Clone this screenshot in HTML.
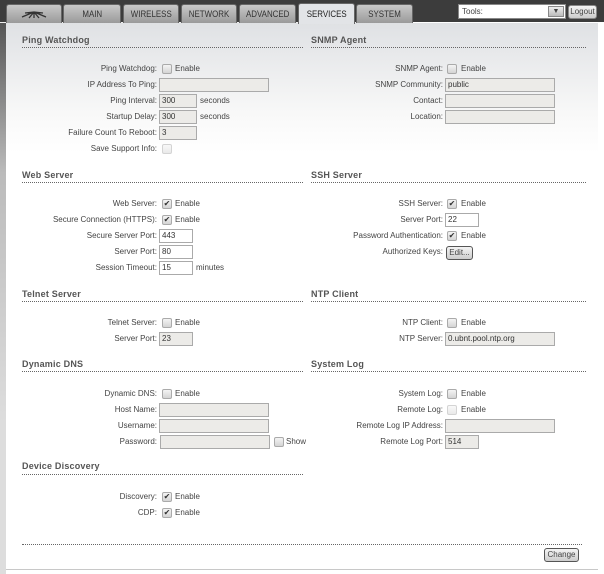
<!DOCTYPE html>
<html><head><meta charset="utf-8"><style>
*{margin:0;padding:0;box-sizing:border-box}
body{width:604px;height:574px;position:relative;overflow:hidden;background:#fff;font-family:"Liberation Sans",Arial,sans-serif;font-size:8px;color:#444}
#top{position:absolute;left:0;top:0;width:604px;height:23px;background:#3c3c3c}
#strip{position:absolute;left:0;top:23px;width:6px;height:551px;background:linear-gradient(#555,#bbb 150px,#ddd 400px,#ddd)}
#panel{position:absolute;left:6px;top:23px;width:592px;height:547px;background:linear-gradient(#dfe1e4,#f8f8f8 90px,#fff 130px);border-bottom:1px solid #c8c8c8}
.tab{position:absolute;top:4px;height:19px;background:linear-gradient(#c8c8c8,#9a9a9a);border:1px solid #666;border-bottom:none;border-radius:3px 3px 0 0;font-size:9px;color:#333;text-align:center;line-height:18px;transform-origin:center}
.tab span{display:inline-block;transform:scaleX(.88)}
.tab.act{background:#e2e4e7;top:3px;height:21px;color:#222;line-height:20px}
.l{position:absolute;text-align:right;line-height:14px;white-space:nowrap}
.t{position:absolute;line-height:14px;white-space:nowrap}
.h{position:absolute;font-weight:bold;font-size:9px;color:#555;line-height:14px;letter-spacing:.2px}
.d{position:absolute;height:1px;border-top:1px dotted #666}
.in{position:absolute;height:14px;border:1px solid #aaa;background:#ecebe8;font-size:8px;line-height:12px;padding-left:2px;color:#333}
.in.w{background:#fff}
.cb{position:absolute;width:10px;height:10px;border:1px solid #aaa;border-radius:2px;background:linear-gradient(#f4f4f4,#d4d4d4);font-size:8px;line-height:8px;text-align:center;color:#333}
.btn{position:absolute;height:14px;border:1px solid #555;border-radius:3px;background:linear-gradient(#f4f4f4,#ccc);font-size:8px;line-height:12px;text-align:center}
</style></head><body>
<div id="top"></div>
<div id="strip"></div>
<div id="panel"></div>
<div style="position:absolute;left:0;top:22px;width:604px;height:1px;background:#eee"></div>
<div class="tab" style="left:6px;width:56px"><svg width="30" height="12" viewBox="0 0 30 12" style="margin-top:3px"><path d="M3 9 L15 4 L27 9 M15 4 L10 10 M15 4 L20 10 M15 4 L15 10 M6 5 L15 4 L24 5" stroke="#333" stroke-width="1.3" fill="none"/></svg></div>
<div class="tab" style="left:63px;width:58px"><span>MAIN</span></div>
<div class="tab" style="left:123px;width:56px"><span>WIRELESS</span></div>
<div class="tab" style="left:181px;width:56px"><span>NETWORK</span></div>
<div class="tab" style="left:239px;width:57px"><span>ADVANCED</span></div>
<div class="tab act" style="left:298px;width:57px"><span>SERVICES</span></div>
<div class="tab" style="left:356px;width:57px"><span>SYSTEM</span></div>
<div style="position:absolute;left:413px;top:22px;width:191px;height:1px;background:#fff"></div>
<div style="position:absolute;left:458px;top:4px;width:108px;height:15px;background:#fff;border:1px solid #888;font-size:8px;line-height:13px;padding-left:3px">Tools:<div style="position:absolute;right:1px;top:1px;width:16px;height:11px;background:linear-gradient(#eee,#bbb);border:1px solid #888;font-size:7px;line-height:9px;text-align:center">▼</div></div>
<div class="btn" style="left:568px;top:5px;width:29px;border-color:#888">Logout</div>

<div class="h" style="left:22px;top:33px">Ping Watchdog</div><div class="d" style="left:22px;top:47px;width:281px"></div>
<div class="h" style="left:311px;top:33px">SNMP Agent</div><div class="d" style="left:311px;top:47px;width:275px"></div>
<div class="h" style="left:22px;top:168px">Web Server</div><div class="d" style="left:22px;top:182px;width:281px"></div>
<div class="h" style="left:311px;top:168px">SSH Server</div><div class="d" style="left:311px;top:182px;width:275px"></div>
<div class="h" style="left:22px;top:287px">Telnet Server</div><div class="d" style="left:22px;top:301px;width:281px"></div>
<div class="h" style="left:311px;top:287px">NTP Client</div><div class="d" style="left:311px;top:301px;width:275px"></div>
<div class="h" style="left:22px;top:357px">Dynamic DNS</div><div class="d" style="left:22px;top:371px;width:281px"></div>
<div class="h" style="left:311px;top:357px">System Log</div><div class="d" style="left:311px;top:371px;width:275px"></div>
<div class="h" style="left:22px;top:459px">Device Discovery</div><div class="d" style="left:22px;top:474px;width:281px"></div>
<div class="d" style="left:22px;top:544px;width:560px"></div>

<div class="l" style="left:0;width:157px;top:62px">Ping Watchdog:</div><div class="cb" style="left:162px;top:64px"></div><div class="t" style="left:175px;top:62px">Enable</div>
<div class="l" style="left:0;width:157px;top:78px">IP Address To Ping:</div><div class="in" style="left:159px;top:78px;width:110px"></div>
<div class="l" style="left:0;width:157px;top:94px">Ping Interval:</div><div class="in" style="left:159px;top:94px;width:38px">300</div><div class="t" style="left:200px;top:94px">seconds</div>
<div class="l" style="left:0;width:157px;top:110px">Startup Delay:</div><div class="in" style="left:159px;top:110px;width:38px">300</div><div class="t" style="left:200px;top:110px">seconds</div>
<div class="l" style="left:0;width:157px;top:126px">Failure Count To Reboot:</div><div class="in" style="left:159px;top:126px;width:38px">3</div>
<div class="l" style="left:0;width:157px;top:142px">Save Support Info:</div><div class="cb" style="left:162px;top:144px;opacity:.5"></div>

<div class="l" style="left:0;width:157px;top:197px">Web Server:</div><div class="cb" style="left:162px;top:199px">✔</div><div class="t" style="left:175px;top:197px">Enable</div>
<div class="l" style="left:0;width:157px;top:213px">Secure Connection (HTTPS):</div><div class="cb" style="left:162px;top:215px">✔</div><div class="t" style="left:175px;top:213px">Enable</div>
<div class="l" style="left:0;width:157px;top:229px">Secure Server Port:</div><div class="in w" style="left:159px;top:229px;width:34px">443</div>
<div class="l" style="left:0;width:157px;top:245px">Server Port:</div><div class="in w" style="left:159px;top:245px;width:34px">80</div>
<div class="l" style="left:0;width:157px;top:261px">Session Timeout:</div><div class="in w" style="left:159px;top:261px;width:34px">15</div><div class="t" style="left:196px;top:261px">minutes</div>

<div class="l" style="left:0;width:157px;top:316px">Telnet Server:</div><div class="cb" style="left:162px;top:318px"></div><div class="t" style="left:175px;top:316px">Enable</div>
<div class="l" style="left:0;width:157px;top:332px">Server Port:</div><div class="in" style="left:159px;top:332px;width:34px">23</div>

<div class="l" style="left:0;width:157px;top:387px">Dynamic DNS:</div><div class="cb" style="left:162px;top:389px"></div><div class="t" style="left:175px;top:387px">Enable</div>
<div class="l" style="left:0;width:157px;top:403px">Host Name:</div><div class="in" style="left:159px;top:403px;width:110px"></div>
<div class="l" style="left:0;width:157px;top:419px">Username:</div><div class="in" style="left:159px;top:419px;width:110px"></div>
<div class="l" style="left:0;width:157px;top:435px">Password:</div><div class="in" style="left:160px;top:435px;width:110px"></div><div class="cb" style="left:274px;top:437px"></div><div class="t" style="left:286px;top:435px">Show</div>

<div class="l" style="left:0;width:157px;top:490px">Discovery:</div><div class="cb" style="left:162px;top:492px">✔</div><div class="t" style="left:175px;top:490px">Enable</div>
<div class="l" style="left:0;width:157px;top:506px">CDP:</div><div class="cb" style="left:162px;top:508px">✔</div><div class="t" style="left:175px;top:506px">Enable</div>

<div class="l" style="left:300px;width:143px;top:62px">SNMP Agent:</div><div class="cb" style="left:447px;top:64px"></div><div class="t" style="left:461px;top:62px">Enable</div>
<div class="l" style="left:300px;width:143px;top:78px">SNMP Community:</div><div class="in" style="left:445px;top:78px;width:110px">public</div>
<div class="l" style="left:300px;width:143px;top:94px">Contact:</div><div class="in" style="left:445px;top:94px;width:110px"></div>
<div class="l" style="left:300px;width:143px;top:110px">Location:</div><div class="in" style="left:445px;top:110px;width:110px"></div>

<div class="l" style="left:300px;width:143px;top:197px">SSH Server:</div><div class="cb" style="left:447px;top:199px">✔</div><div class="t" style="left:461px;top:197px">Enable</div>
<div class="l" style="left:300px;width:143px;top:213px">Server Port:</div><div class="in w" style="left:445px;top:213px;width:34px">22</div>
<div class="l" style="left:300px;width:143px;top:229px">Password Authentication:</div><div class="cb" style="left:447px;top:231px">✔</div><div class="t" style="left:461px;top:229px">Enable</div>
<div class="l" style="left:300px;width:143px;top:245px">Authorized Keys:</div><div class="btn" style="left:446px;top:246px;width:27px">Edit...</div>

<div class="l" style="left:300px;width:143px;top:316px">NTP Client:</div><div class="cb" style="left:447px;top:318px"></div><div class="t" style="left:461px;top:316px">Enable</div>
<div class="l" style="left:300px;width:143px;top:332px">NTP Server:</div><div class="in" style="left:445px;top:332px;width:110px">0.ubnt.pool.ntp.org</div>

<div class="l" style="left:300px;width:143px;top:387px">System Log:</div><div class="cb" style="left:447px;top:389px"></div><div class="t" style="left:461px;top:387px">Enable</div>
<div class="l" style="left:300px;width:143px;top:403px">Remote Log:</div><div class="cb" style="left:447px;top:405px;opacity:.5"></div><div class="t" style="left:461px;top:403px">Enable</div>
<div class="l" style="left:300px;width:143px;top:419px">Remote Log IP Address:</div><div class="in" style="left:445px;top:419px;width:110px"></div>
<div class="l" style="left:300px;width:143px;top:435px">Remote Log Port:</div><div class="in" style="left:445px;top:435px;width:34px">514</div>

<div class="btn" style="left:544px;top:548px;width:35px">Change</div>
</body></html>
